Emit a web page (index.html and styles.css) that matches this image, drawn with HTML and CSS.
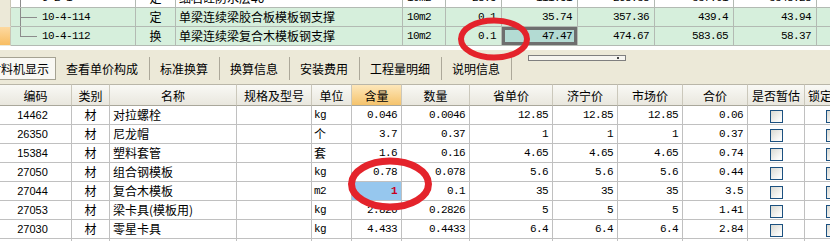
FILE: index.html
```html
<!DOCTYPE html>
<html lang="zh">
<head>
<meta charset="utf-8">
<title>定额与料机</title>
<link rel="stylesheet" href="styles.css">
</head>
<body>
<div class="quota-wrap">
  <table class="quota">
    <colgroup>
      <col class="q-ind"><col class="q-code"><col class="q-type"><col class="q-name"><col class="q-unit">
      <col class="q-qty"><col class="q-price"><col class="q-sum"><col class="q-a"><col class="q-b"><col class="q-rest">
    </colgroup>
    <tr class="r-plain">
      <td class="ind"></td>
      <td class="code"><span class="branch"></span><span class="mono">9-2-1</span></td>
      <td class="type">定</td>
      <td class="name">细石砼防水层40</td>
      <td class="unit mono">10m2</td>
      <td class="num">28.5</td>
      <td class="num">111.51</td>
      <td class="num">268.38</td>
      <td class="num">337.01</td>
      <td class="num">3348.28</td>
      <td></td>
    </tr>
    <tr class="r-green">
      <td class="ind"></td>
      <td class="code"><span class="branch"></span><span class="mono">10-4-114</span></td>
      <td class="type">定</td>
      <td class="name">单梁连续梁胶合板模板钢支撑</td>
      <td class="unit mono">10m2</td>
      <td class="num">0.1</td>
      <td class="num">35.74</td>
      <td class="num">357.36</td>
      <td class="num">439.4</td>
      <td class="num">43.94</td>
      <td></td>
    </tr>
    <tr class="r-green">
      <td class="ind ind-sel"></td>
      <td class="code"><span class="branch last"></span><span class="mono">10-4-112</span></td>
      <td class="type">换</td>
      <td class="name">单梁连续梁复合木模板钢支撑</td>
      <td class="unit mono">10m2</td>
      <td class="num">0.1</td>
      <td class="num cur">47.47</td>
      <td class="num">474.67</td>
      <td class="num">583.65</td>
      <td class="num">58.37</td>
      <td></td>
    </tr>
  </table>
</div>

<div class="tabs">
  <div class="tab sel">材料机显示</div>
  <div class="tab">查看单价构成</div>
  <div class="tab">标准换算</div>
  <div class="tab">换算信息</div>
  <div class="tab">安装费用</div>
  <div class="tab">工程量明细</div>
  <div class="tab">说明信息</div>
  <div class="handle"><span class="grip"></span></div>
</div>

<table class="mat">
  <colgroup>
    <col class="m-code"><col class="m-cat"><col class="m-name"><col class="m-spec"><col class="m-unit">
    <col class="m-qty"><col class="m-amt"><col class="m-prov"><col class="m-jn"><col class="m-mkt">
    <col class="m-sum"><col class="m-est"><col class="m-lock">
  </colgroup>
  <thead>
    <tr>
      <th>编码</th><th>类别</th><th>名称</th><th>规格及型号</th><th>单位</th>
      <th class="hot">含量</th><th>数量</th><th>省单价</th><th>济宁价</th><th>市场价</th>
      <th>合价</th><th>是否暂估</th><th>锁定含量</th>
    </tr>
  </thead>
  <tbody>
    <tr><td class="mc">14462</td><td class="cat">材</td><td class="mn">对拉螺栓</td><td></td><td class="mu mono">kg</td><td class="num">0.046</td><td class="num">0.0046</td><td class="num">12.85</td><td class="num">12.85</td><td class="num">12.85</td><td class="num">0.06</td><td class="chk"><span class="cb"></span></td><td class="chk"><span class="cb"></span></td></tr>
    <tr><td class="mc">26350</td><td class="cat">材</td><td class="mn">尼龙帽</td><td></td><td class="mu">个</td><td class="num">3.7</td><td class="num">0.37</td><td class="num">1</td><td class="num">1</td><td class="num">1</td><td class="num">0.37</td><td class="chk"><span class="cb"></span></td><td class="chk"><span class="cb"></span></td></tr>
    <tr><td class="mc">15384</td><td class="cat">材</td><td class="mn">塑料套管</td><td></td><td class="mu">套</td><td class="num">1.6</td><td class="num">0.16</td><td class="num">4.65</td><td class="num">4.65</td><td class="num">4.65</td><td class="num">0.74</td><td class="chk"><span class="cb"></span></td><td class="chk"><span class="cb"></span></td></tr>
    <tr><td class="mc">27050</td><td class="cat">材</td><td class="mn">组合钢模板</td><td></td><td class="mu mono">kg</td><td class="num">0.78</td><td class="num">0.078</td><td class="num">5.6</td><td class="num">5.6</td><td class="num">5.6</td><td class="num">0.44</td><td class="chk"><span class="cb"></span></td><td class="chk"><span class="cb"></span></td></tr>
    <tr><td class="mc">27044</td><td class="cat">材</td><td class="mn">复合木模板</td><td></td><td class="mu mono">m2</td><td class="num edit">1</td><td class="num">0.1</td><td class="num">35</td><td class="num">35</td><td class="num">35</td><td class="num">3.5</td><td class="chk"><span class="cb"></span></td><td class="chk"><span class="cb"></span></td></tr>
    <tr><td class="mc">27053</td><td class="cat">材</td><td class="mn">梁卡具(模板用)</td><td></td><td class="mu mono">kg</td><td class="num">2.826</td><td class="num">0.2826</td><td class="num">5</td><td class="num">5</td><td class="num">5</td><td class="num">1.41</td><td class="chk"><span class="cb"></span></td><td class="chk"><span class="cb"></span></td></tr>
    <tr><td class="mc">27030</td><td class="cat">材</td><td class="mn">零星卡具</td><td></td><td class="mu mono">kg</td><td class="num">4.433</td><td class="num">0.4433</td><td class="num">6.4</td><td class="num">6.4</td><td class="num">6.4</td><td class="num">2.84</td><td class="chk"><span class="cb"></span></td><td class="chk"><span class="cb"></span></td></tr>
    <tr><td></td><td></td><td></td><td></td><td></td><td></td><td></td><td></td><td></td><td></td><td></td><td></td><td></td></tr>
  </tbody>
</table>

<svg class="marks" width="830" height="241" viewBox="0 0 830 241" aria-hidden="true">
  <ellipse cx="494" cy="39" rx="33" ry="18.5" fill="none" stroke="#e4232b" stroke-width="6"/>
  <ellipse cx="390" cy="184" rx="38.5" ry="23" fill="none" stroke="#e4232b" stroke-width="7"/>
</svg>
</body>
</html>
```

FILE: styles.css
```css
* { box-sizing: border-box; }
html, body { margin: 0; padding: 0; }
body {
  width: 830px;
  height: 241px;
  overflow: hidden;
  position: relative;
  background: #ece9d8;
  font-family: "Noto Sans CJK SC", "Noto Sans", sans-serif;
  font-size: 12px;
  color: #000;
}
table { border-collapse: separate; border-spacing: 0; table-layout: fixed; }
td, th { padding: 0; white-space: nowrap; overflow: hidden; }

.mono, .num {
  font-family: "Liberation Mono", monospace;
  font-size: 11px;
  letter-spacing: -0.6px;
}
.num { text-align: right; padding-right: 5px; }

/* upper quota grid */
.quota-wrap { margin-top: -11px; background: #fff; padding-bottom: 4px; overflow: hidden; }
.quota { width: 880px; }
.q-ind { width: 11px; }
.q-code { width: 125px; }
.q-type { width: 40px; }
.q-name { width: 227px; }
.q-unit { width: 43px; }
.q-qty { width: 56px; }
.q-price { width: 76px; }
.q-sum { width: 77px; }
.q-a { width: 79px; }
.q-b { width: 83px; }
.q-rest { width: 83px; }
.quota td {
  height: 19px;
  line-height: 18px;
  border-right: 1px solid #b3bab3;
  border-bottom: 1px solid #b3bab3;
}
.r-plain td { background: #fff; }
.r-green td { background: #d6efdc; }
.quota td.ind { background: #ece9d8; border-bottom-color: #ece9d8; border-right-color: #c9c6b6; }
.quota td.ind-sel { background: linear-gradient(#fdd9a0, #f8bd62); }
.code { padding-left: 9px; }
.code .mono { display: inline-block; vertical-align: top; line-height: 18px; }
.branch {
  display: inline-block;
  width: 17px;
  height: 18px;
  margin-right: 5px;
  vertical-align: top;
  background:
    linear-gradient(#8c8c8c, #8c8c8c) 0 0 / 1px 100% no-repeat,
    linear-gradient(#8c8c8c, #8c8c8c) 0 9px / 17px 1px no-repeat;
}
.branch.last {
  background:
    linear-gradient(#8c8c8c, #8c8c8c) 0 0 / 1px 10px no-repeat,
    linear-gradient(#8c8c8c, #8c8c8c) 0 9px / 17px 1px no-repeat;
}
.type { text-align: center; }
.name { padding-left: 3px; }
.unit { padding-left: 4px; }
.quota td.cur { background: #b3dbd3; box-shadow: inset 0 0 0 3px #6e6e6e; }

/* tab strip */
.tabs {
  display: flex;
  align-items: flex-start;
  height: 34px;
  padding-top: 7px;
  background: #ece9d8;
}
.tab {
  height: 23px;
  line-height: 23px;
  padding: 0 11px 0 10px;
  border-right: 1px solid #aca899;
  flex: none;
}
.tab.sel {
  margin-left: -17px;
  padding: 0 6px;
  line-height: 21px;
  background: #f9f8f3;
  border: 1px solid #a5a292;
  border-left: none;
}
.handle {
  flex: none;
  margin: -2px 0 0 16px;
  width: 98px;
  height: 6px;
  border: 1px solid #7f7f7f;
  background: #f6f5f0;
  display: flex;
  justify-content: flex-end;
  padding: 1px 6px 0 0;
}
.grip { width: 2px; height: 2px; background: #444; }

/* lower material grid */
.mat { width: 860px; }
.m-code { width: 72px; }
.m-cat { width: 38px; }
.m-name { width: 127px; }
.m-spec { width: 75px; }
.m-unit { width: 40px; }
.m-qty { width: 50px; }
.m-amt { width: 68px; }
.m-prov { width: 83px; }
.m-jn { width: 65px; }
.m-mkt { width: 65px; }
.m-sum { width: 65px; }
.m-est { width: 57px; }
.m-lock { width: 55px; }
.mat th {
  height: 22px;
  font-weight: normal;
  text-align: center;
  background: linear-gradient(#f9f9f5, #e9e7de);
  border-top: 1px solid #b9b6a8;
  border-right: 1px solid #cbc8bb;
  border-bottom: 1px solid #a9a79b;
}
.mat th.hot { background: linear-gradient(#fde7ba, #f5c36c); }
.mat td {
  height: 19px;
  line-height: 18px;
  background: #fff;
  border-right: 1px solid #c0c0c0;
  border-bottom: 1px solid #c0c0c0;
}
.mat .num { padding-right: 4px; }
.mc { text-align: center; font-family: "Liberation Sans", sans-serif; font-size: 11px; padding-right: 6px; }
.cat { text-align: center; }
.mn { padding-left: 3px; }
.mu { padding-left: 2px; }
.mat td.edit { background: #96c7ee; color: #c8001e; font-weight: bold; }
.chk { text-align: center; }
.cb {
  display: inline-block;
  width: 13px;
  height: 13px;
  vertical-align: middle;
  border: 1px solid #1c5180;
  background: linear-gradient(135deg, #d9d9d2 0%, #fbfbfa 80%);
}

/* annotation overlay */
.marks { position: absolute; left: 0; top: 0; pointer-events: none; }
```
